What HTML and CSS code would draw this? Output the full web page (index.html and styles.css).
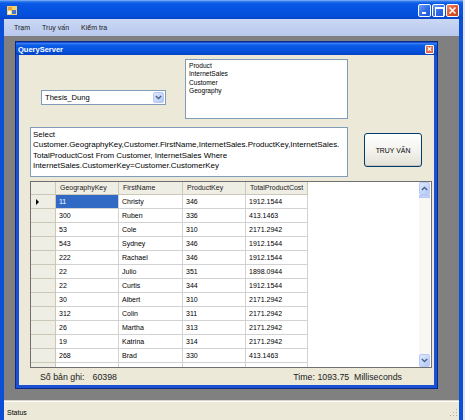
FILE: index.html
```html
<!DOCTYPE html>
<html lang="vi">
<head>
    <meta charset="UTF-8">
    <title>QueryServer</title>
    <link rel="stylesheet" href="styles.css">
</head>
<body>
    <div class="app">
        <div class="titlebar">
            <svg class="app-icon" width="10" height="9" viewBox="0 0 10 9">
                <rect x="0" y="0" width="10" height="9" fill="#f4d36a"/>
                <rect x="1" y="1" width="4" height="3" fill="#e8a23a"/>
                <rect x="5" y="4" width="4" height="4" fill="#4a77c9"/>
                <rect x="1" y="5" width="3" height="3" fill="#ffffff"/>
            </svg>
            <div class="caption-btns">
                <span class="cbtn cbtn-min"></span>
                <span class="cbtn cbtn-max"></span>
                <span class="cbtn cbtn-close">
                    <svg width="9" height="9" viewBox="0 0 9 9"><path d="M1.5 1.5 L7.5 7.5 M7.5 1.5 L1.5 7.5" stroke="#fff" stroke-width="1.6"/></svg>
                </span>
            </div>
        </div>

        <div class="menubar">
            <span class="menu-item">Trạm</span>
            <span class="menu-item">Truy vấn</span>
            <span class="menu-item">Kiểm tra</span>
        </div>

        <div class="mdi">
            <div class="child">
                <div class="child-title">
                    <span>QueryServer</span>
                    <span class="child-close">
                        <svg width="8" height="8" viewBox="0 0 8 8"><path d="M2 2 L6 6 M6 2 L2 6" stroke="#fff" stroke-width="1.3"/></svg>
                    </span>
                </div>

                <div class="child-body">
                    <div class="row-top">
                        <div class="combo">
                            <span class="combo-text">Thesis_Dung</span>
                            <span class="combo-btn">
                                <svg width="7" height="5" viewBox="0 0 7 5"><path d="M0.8 1 L3.5 3.6 L6.2 1" fill="none" stroke="#4d6185" stroke-width="1.4"/></svg>
                            </span>
                        </div>
                        <div class="listbox">
                            <div>Product</div>
                            <div>InternetSales</div>
                            <div>Customer</div>
                            <div>Geography</div>
                        </div>
                    </div>

                    <div class="row-query">
                        <div class="querybox">
                            Select<br>
                            Customer.GeographyKey,Customer.FirstName,InternetSales.ProductKey,InternetSales.<br>
                            TotalProductCost From Customer, InternetSales Where<br>
                            InternetSales.CustomerKey=Customer.CustomerKey
                        </div>
                        <button class="run-btn">TRUY VẤN</button>
                    </div>

                    <div class="grid">
                        <div class="grid-view">
                            <div class="grid-table">
                                <div class="hcell corner"></div>
                                <div class="hcell">GeographyKey</div>
                                <div class="hcell">FirstName</div>
                                <div class="hcell">ProductKey</div>
                                <div class="hcell">TotalProductCost</div>

                                <div class="rhead current"><span class="arrow"></span></div>
                                <div class="cell selected">11</div><div class="cell">Christy</div><div class="cell">346</div><div class="cell">1912.1544</div>
                                <div class="rhead"></div>
                                <div class="cell">300</div><div class="cell">Ruben</div><div class="cell">336</div><div class="cell">413.1463</div>
                                <div class="rhead"></div>
                                <div class="cell">53</div><div class="cell">Cole</div><div class="cell">310</div><div class="cell">2171.2942</div>
                                <div class="rhead"></div>
                                <div class="cell">543</div><div class="cell">Sydney</div><div class="cell">346</div><div class="cell">1912.1544</div>
                                <div class="rhead"></div>
                                <div class="cell">222</div><div class="cell">Rachael</div><div class="cell">346</div><div class="cell">1912.1544</div>
                                <div class="rhead"></div>
                                <div class="cell">22</div><div class="cell">Julio</div><div class="cell">351</div><div class="cell">1898.0944</div>
                                <div class="rhead"></div>
                                <div class="cell">22</div><div class="cell">Curtis</div><div class="cell">344</div><div class="cell">1912.1544</div>
                                <div class="rhead"></div>
                                <div class="cell">30</div><div class="cell">Albert</div><div class="cell">310</div><div class="cell">2171.2942</div>
                                <div class="rhead"></div>
                                <div class="cell">312</div><div class="cell">Colin</div><div class="cell">311</div><div class="cell">2171.2942</div>
                                <div class="rhead"></div>
                                <div class="cell">26</div><div class="cell">Martha</div><div class="cell">313</div><div class="cell">2171.2942</div>
                                <div class="rhead"></div>
                                <div class="cell">19</div><div class="cell">Katrina</div><div class="cell">314</div><div class="cell">2171.2942</div>
                                <div class="rhead"></div>
                                <div class="cell">268</div><div class="cell">Brad</div><div class="cell">330</div><div class="cell">413.1463</div>
                                <div class="rhead"></div>
                                <div class="cell">395</div><div class="cell">Eric</div><div class="cell">312</div><div class="cell">2171.2942</div>
                            </div>
                        </div>
                        <div class="vscroll">
                            <span class="sbtn">
                                <svg width="7" height="5" viewBox="0 0 7 5"><path d="M0.8 4 L3.5 1.4 L6.2 4" fill="none" stroke="#4d6185" stroke-width="1.4"/></svg>
                            </span>
                            <span class="sthumb"></span>
                            <span class="strack"></span>
                            <span class="sbtn">
                                <svg width="7" height="5" viewBox="0 0 7 5"><path d="M0.8 1 L3.5 3.6 L6.2 1" fill="none" stroke="#4d6185" stroke-width="1.4"/></svg>
                            </span>
                        </div>
                    </div>

                    <div class="footer">
                        <span class="count-label">Số bản ghi:</span>
                        <span class="count">60398</span>
                        <span class="time">Time: 1093.75&nbsp; Milliseconds</span>
                    </div>
                </div>
            </div>
        </div>

        <div class="statusbar">
            <span>Status</span>
            <span class="grip"></span>
        </div>
    </div>
</body>
</html>
```

FILE: styles.css
```css
* {
    margin: 0;
    padding: 0;
    box-sizing: border-box;
}

body {
    width: 465px;
    height: 420px;
    overflow: hidden;
    background: #dfe4ee;
    font-family: 'Liberation Sans', Arial, sans-serif;
    color: #000;
}

.app {
    width: 463px;
    height: 420px;
    display: flex;
    flex-direction: column;
    border-left: 4px solid #0a4fd6;
    border-right: 4px solid #0a4fd6;
}

/* outer window caption */
.titlebar {
    height: 19px;
    margin: 0 -4px;
    padding: 0 4px 0 7px;
    display: flex;
    align-items: center;
    justify-content: space-between;
    background: linear-gradient(to bottom, #3d86f2 0%, #0a5ae6 12%, #0553e0 45%, #0550dc 80%, #0444c4 100%);
    border-top: 1px solid #6fa2f0;
}

.app-icon {
    display: block;
}

.caption-btns {
    display: flex;
    gap: 1px;
}

.cbtn {
    width: 13px;
    height: 13px;
    border: 1px solid #fff;
    border-radius: 2px;
    background: linear-gradient(135deg, #6f9ff5 0%, #2a67e6 60%, #1d55d8 100%);
    position: relative;
    display: flex;
    align-items: center;
    justify-content: center;
}

.cbtn-min::after {
    content: '';
    position: absolute;
    left: 3px;
    bottom: 2px;
    width: 4px;
    height: 2px;
    background: #fff;
}

.cbtn-max::after {
    content: '';
    position: absolute;
    left: 2px;
    top: 2px;
    width: 7px;
    height: 7px;
    border: 1px solid #fff;
    border-top-width: 2px;
}

.cbtn-close {
    background: linear-gradient(135deg, #f08a64 0%, #e0532a 55%, #c63e17 100%);
}

.cbtn-close svg {
    display: block;
}

/* menu strip */
.menubar {
    height: 17px;
    display: flex;
    align-items: center;
    padding-left: 10px;
    gap: 12px;
    background: linear-gradient(to bottom, #cbd8f4, #b9c8ee);
    font-size: 7px;
}

.menu-item {
    color: #1a1a1a;
}

/* MDI client */
.mdi {
    flex: 1;
    background: #808080;
    padding: 6px 0 0 12px;
    border-bottom: 1px solid #d9d6c8;
}

.child {
    width: 421px;
    height: 346px;
    border: 3px solid #1b4fd4;
    border-top-width: 1px;
    background: #ece9d8;
    display: flex;
    flex-direction: column;
    box-shadow: 0 0 0 1px #0b2a88;
}

.child-title {
    height: 13px;
    margin: 0 -3px;
    padding: 0 3px 0 2px;
    display: flex;
    align-items: center;
    justify-content: space-between;
    background: linear-gradient(to bottom, #3d86f2 0%, #0a5ae6 20%, #0553e0 60%, #0444c4 100%);
    color: #fff;
    font-weight: bold;
    font-size: 7.5px;
}

.child-close {
    width: 9px;
    height: 9px;
    border: 1px solid #fff;
    border-radius: 1px;
    background: #e36a48;
    display: flex;
    align-items: center;
    justify-content: center;
}

.child-close svg {
    display: block;
}

.child-body {
    flex: 1;
    display: flex;
    flex-direction: column;
}

/* selection controls */
.row-top {
    display: flex;
    padding: 4px 0 0 22px;
}

.combo {
    width: 125px;
    height: 15px;
    margin-top: 31px;
    border: 1px solid #7f9db9;
    background: #fff;
    display: flex;
    align-items: center;
    justify-content: space-between;
    padding: 0 1px 0 3px;
    font-size: 7.6px;
}

.combo-btn,
.sbtn {
    width: 11px;
    height: 11px;
    border: 1px solid #b7c9f3;
    border-radius: 2px;
    background: linear-gradient(135deg, #e0e9fe 0%, #c4d5fb 60%, #b3c7f6 100%);
    display: flex;
    align-items: center;
    justify-content: center;
}

.combo-btn svg,
.sbtn svg {
    display: block;
}

.listbox {
    width: 163px;
    height: 60px;
    margin-left: 19px;
    border: 1px solid #7f9db9;
    background: #fff;
    padding: 2px 0 0 3px;
    font-size: 6.6px;
    line-height: 8.3px;
}

.row-query {
    display: flex;
    margin-top: 8px;
    padding-left: 11px;
}

.querybox {
    width: 318px;
    height: 50px;
    border: 1px solid #7f9db9;
    background: #fff;
    padding: 2px 0 0 2px;
    font-size: 7.95px;
    line-height: 10.3px;
    white-space: nowrap;
    overflow: hidden;
}

.run-btn {
    width: 58px;
    height: 34px;
    margin: 6px 0 0 16px;
    border: 1px solid #003c74;
    border-radius: 3px;
    background: linear-gradient(to bottom, #ffffff 0%, #f4f3ee 50%, #e3e1d5 100%);
    box-shadow: inset 0 -1px 0 #c8c5b4;
    font-family: 'Liberation Sans', Arial, sans-serif;
    font-size: 6.9px;
    color: #000;
}

/* data grid */
.grid {
    width: 402px;
    height: 187px;
    margin: 4px 0 0 11px;
    border: 1px solid #6f6f6f;
    background: #fff;
    display: flex;
}

.grid-view {
    flex: 1;
    overflow: hidden;
}

.grid-table {
    display: grid;
    grid-template-columns: 25px 63px 64px 63px 62px;
    grid-template-rows: 13px;
    grid-auto-rows: 14px;
    font-size: 7px;
}

.hcell,
.rhead {
    background: #efeee5;
    border-right: 1px solid #cbc8b8;
    border-bottom: 1px solid #cbc8b8;
}

.hcell {
    padding-left: 4px;
    line-height: 12px;
    color: #222;
}

.rhead {
    display: flex;
    align-items: center;
    padding-left: 5px;
}

.arrow {
    width: 0;
    height: 0;
    border-top: 3px solid transparent;
    border-bottom: 3px solid transparent;
    border-left: 3px solid #000;
}

.cell {
    padding-left: 3px;
    line-height: 13px;
    border-right: 1px solid #d2d2d2;
    border-bottom: 1px solid #d2d2d2;
    white-space: nowrap;
    overflow: hidden;
}

.cell.selected {
    background: #316ac5;
    color: #fff;
}

.vscroll {
    width: 11px;
    display: flex;
    flex-direction: column;
    background: #f8f7f3;
    margin-right: 1px;
}

.vscroll .sbtn {
    height: 13px;
}

.sthumb {
    height: 3px;
    background: #c4d5fb;
    border: 1px solid #b7c9f3;
}

.strack {
    flex: 1;
}

/* totals line */
.footer {
    display: flex;
    align-items: center;
    height: 16px;
    margin-top: 1px;
    padding-left: 21px;
    font-size: 8.8px;
    color: #222;
}

.count {
    margin-left: 8px;
}

.time {
    margin-left: auto;
    margin-right: 32px;
}

/* status strip */
.statusbar {
    height: 19px;
    display: flex;
    align-items: center;
    justify-content: space-between;
    padding: 2px 2px 0 3px;
    background: #ece9d8;
    border-top: 1px solid #fff;
    font-size: 7px;
}

.grip {
    width: 8px;
    height: 8px;
    background: radial-gradient(circle, #b0ad9e 0.8px, transparent 1px) 0 0 / 3px 3px;
    clip-path: polygon(100% 0, 100% 100%, 0 100%);
}
```
